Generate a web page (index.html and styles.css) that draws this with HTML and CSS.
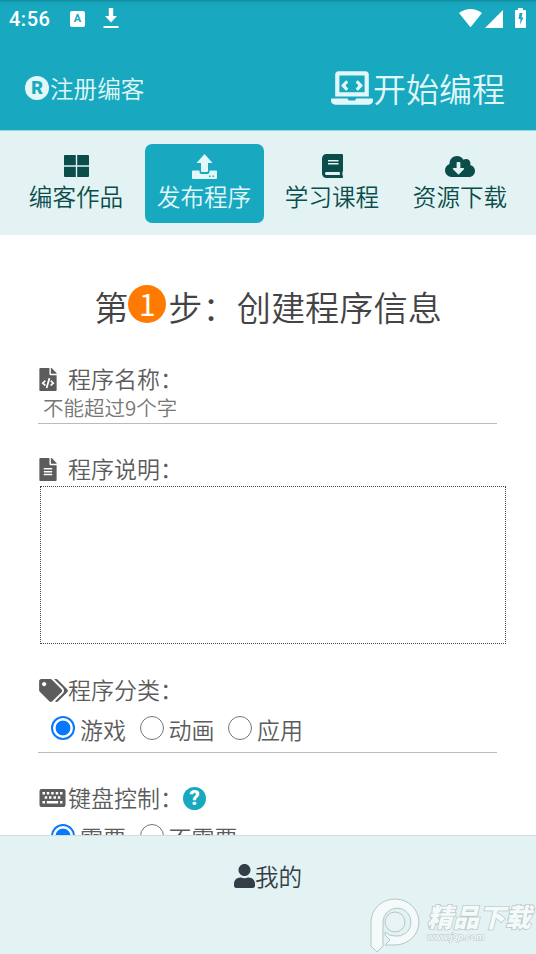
FILE: index.html
```html
<!DOCTYPE html>
<html lang="zh-CN">
<head>
<meta charset="utf-8">
<meta name="viewport" content="width=device-width, initial-scale=1">
<title>发布程序</title>
<link rel="stylesheet" href="styles.css">
</head>
<body>
<div class="app">
  <div class="status">
    <span class="clock">4:56</span>
    <span class="ime">A</span>
    <svg class="s-down" viewBox="0 0 16 21"><path d="M5.8 0h4.4v8H14l-6 6.500L2 8h3.800zM0.500 18h15v2h-15z"/></svg>
    <span class="grow"></span>
    <svg class="wifi" viewBox="0 0 23 18"><path d="M0 4Q11.500-4 23 4L11.500 18.300z"/></svg>
    <svg class="signal" viewBox="0 0 18 18"><path d="M18 0v18H0z"/></svg>
    <svg class="battery" viewBox="0 0 11 20"><path fill-rule="evenodd" d="M3 0h5v2h2q1 0 1 1v16q0 1-1 1H1q-1 0-1-1V3q0-1 1-1h2zM7.500 5H4.500L3.500 11h2L5 16.500 8.500 9.500H6.500z"/></svg>
  </div>

  <header class="header">
    <a class="register"><span class="reg-mark">R</span>注册编客</a>
    <a class="start">
      <svg viewBox="0 0 640 512"><path d="M255 256l-25.600-25.600c-6.200-6.200-6.200-16.400 0-22.600L255 182c6.200-6.200 6.200-16.400 0-22.600l-11.300-11.300c-6.200-6.200-16.400-6.200-22.600 0l-59.800 59.800c-6.200 6.200-6.200 16.400 0 22.600l59.800 59.800c6.200 6.200 16.400 6.200 22.600 0l11.300-11.300c6.200-6.300 6.200-16.500 0-23zM396.300 290.300c6.200 6.200 16.400 6.200 22.600 0l59.800-59.800c6.200-6.200 6.200-16.400 0-22.600l-59.800-59.800c-6.200-6.200-16.400-6.200-22.600 0L385 159.400c-6.200 6.200-6.200 16.400 0 22.600l25.600 25.800c6.200 6.200 6.200 16.400 0 22.600L385 256c-6.200 6.200-6.200 16.400 0 22.600zM624 416H381.500c-.7 19.800-14.700 32-32.700 32H288c-18.700 0-33-17.500-32.800-32H16c-8.800 0-16 7.200-16 16v16c0 35.200 28.800 64 64 64h512c35.200 0 64-28.800 64-64v-16c0-8.800-7.200-16-16-16zM576 48c0-26.400-21.600-48-48-48H112C85.600 0 64 21.600 64 48v336h512zm-64 272H128V64h384z"/></svg>开始编程</a>
  </header>

  <nav class="tabs">
    <a class="tab">
      <svg class="i-grid" viewBox="0 0 25 22"><path d="M1 0h10q.8 0 .8.800V10.200H0V1Q0 0 1 0zM13.200 0H24q1 0 1 1v9.200H13.200zM0 11.800h11.800V22H1q-1 0-1-1zM13.200 11.800H25V21q0 1-1 1H13.200z"/></svg>
      <span>编客作品</span></a>
    <a class="tab active">
      <svg class="i-upload" viewBox="0 0 25 25"><path fill-rule="evenodd" d="M12.500 0L20.500 9H16v8q0 1-1 1h-5q-1 0-1-1V9H4.500zM1 16.500h6.500V18q0 2 2 2h6q2 0 2-2v-1.500H24q1 0 1 1V24q0 1-1 1H1q-1 0-1-1v-6.500q0-1 1-1zM17 21.500v1.400h1.500v-1.400zM20.500 21.500v1.400H22v-1.400z"/></svg>
      <span>发布程序</span></a>
    <a class="tab">
      <svg class="i-book" viewBox="0 0 448 512"><path d="M448 360V24c0-13.300-10.700-24-24-24H96C43 0 0 43 0 96v320c0 53 43 96 96 96h328c13.300 0 24-10.700 24-24v-16c0-7.500-3.500-14.300-8.900-18.700-4.200-15.400-4.200-59.300 0-74.700 5.400-4.300 8.900-11.100 8.900-18.600zM128 134c0-3.300 2.700-6 6-6h212c3.300 0 6 2.700 6 6v20c0 3.300-2.700 6-6 6H134c-3.300 0-6-2.700-6-6v-20zm0 64c0-3.300 2.700-6 6-6h212c3.300 0 6 2.700 6 6v20c0 3.300-2.700 6-6 6H134c-3.300 0-6-2.700-6-6v-20zm253.400 250H96c-17.700 0-32-14.300-32-32 0-17.600 14.400-32 32-32h285.400c-1.900 17.100-1.900 46.900 0 64z"/></svg>
      <span>学习课程</span></a>
    <a class="tab">
      <svg class="i-cloud" viewBox="0 0 640 448"><path d="M537.600 194.600c4-10.700 6.400-22.400 6.400-34.600 0-53-43-96-96-96-19.700 0-38.100 6-53.300 16.200C367 32.200 315.300 0 256 0 167.600 0 96 71.600 96 160c0 2.700.1 5.400.2 8.100C40.200 187.800 0 241.200 0 304c0 79.500 64.500 144 144 144h368c70.700 0 128-57.300 128-128 0-61.900-44-113.600-102.400-125.400zm-132.900 88.700L299.300 388.700c-6.200 6.200-16.400 6.200-22.600 0L171.300 283.300c-10.100-10.100-2.900-27.300 11.300-27.300H248V144c0-8.800 7.200-16 16-16h48c8.800 0 16 7.200 16 16v112h65.400c14.200 0 21.400 17.200 11.300 27.300z"/></svg>
      <span>资源下载</span></a>
  </nav>

  <main class="form">
    <h1 class="title">第<span class="num">1</span>步：创建程序信息</h1>

    <section class="field name">
      <div class="label"><span class="icon"><svg class="i-file" viewBox="0 0 384 512"><path d="M384 121.900V128H256V0h6.100c6.400 0 12.500 2.500 17 7l97.900 98c4.500 4.500 7 10.600 7 16.900zM248 160c-13.200 0-24-10.800-24-24V0H24C10.700 0 0 10.700 0 24v464c0 13.300 10.700 24 24 24h336c13.300 0 24-10.700 24-24V160zM123.200 400.500a5.400 5.400 0 0 1-7.600.2l-64.900-60.800a5.400 5.400 0 0 1 0-7.900l64.900-60.800a5.400 5.400 0 0 1 7.600.2l19.600 20.900a5.400 5.400 0 0 1-.4 7.700L101.700 336l40.700 35.900a5.400 5.400 0 0 1 .4 7.700zm51.300 50.500l-27.500-8a5.400 5.400 0 0 1-3.700-6.700l61.400-211.600a5.400 5.400 0 0 1 6.700-3.700l27.500 8a5.400 5.400 0 0 1 3.700 6.700l-61.400 211.600a5.400 5.400 0 0 1-6.700 3.700zm158.800-111l-64.900 60.800a5.400 5.400 0 0 1-7.600-.2l-19.600-20.900a5.400 5.400 0 0 1 .4-7.700l40.700-36-40.700-35.900a5.400 5.400 0 0 1-.4-7.700l19.600-20.900a5.400 5.400 0 0 1 7.600-.2l64.900 60.800a5.400 5.400 0 0 1 0 7.900z"/></svg></span><span>程序名称：</span></div>
      <input class="input" type="text" placeholder="不能超过9个字">
    </section>

    <section class="field desc">
      <div class="label"><span class="icon"><svg class="i-file" viewBox="0 0 384 512"><path d="M224 136V0H24C10.700 0 0 10.700 0 24v464c0 13.300 10.700 24 24 24h336c13.300 0 24-10.700 24-24V160H248c-13.200 0-24-10.800-24-24zm64 236c0 6.600-5.400 12-12 12H108c-6.600 0-12-5.400-12-12v-8c0-6.600 5.400-12 12-12h168c6.600 0 12 5.400 12 12zm0-64c0 6.600-5.400 12-12 12H108c-6.600 0-12-5.400-12-12v-8c0-6.600 5.400-12 12-12h168c6.600 0 12 5.400 12 12zm0-72v8c0 6.600-5.400 12-12 12H108c-6.600 0-12-5.400-12-12v-8c0-6.600 5.400-12 12-12h168c6.600 0 12 5.400 12 12zm96-114.100V128H256V0h6.100c6.400 0 12.500 2.500 17 7l97.900 98c4.500 4.500 7 10.600 7 16.900z"/></svg></span><span>程序说明：</span></div>
      <textarea class="area"></textarea>
    </section>

    <section class="field kind">
      <div class="label"><span class="icon"><svg class="i-tags" viewBox="0 0 640 512"><path d="M497.900 225.900L286.100 14.100A48 48 0 0 0 252.100 0H48C21.500 0 0 21.500 0 48v204.100a48 48 0 0 0 14.100 33.900l211.800 211.900c18.700 18.700 49.100 18.700 67.900 0l204.100-204.100c18.700-18.800 18.700-49.200 0-67.900zM112 160c-26.500 0-48-21.500-48-48s21.500-48 48-48 48 21.500 48 48-21.500 48-48 48zm513.900 133.800L421.800 497.900c-18.700 18.700-49.100 18.700-67.900 0l-.4-.4L527.600 323.500c17-17 26.400-39.600 26.400-63.600s-9.400-46.600-26.400-63.600L331.400 0h48.700a48 48 0 0 1 33.900 14.100l211.900 211.800c18.700 18.700 18.700 49.100 0 67.900z"/></svg></span><span>程序分类：</span></div>
      <div class="radios">
        <label><i class="dot on"></i>游戏</label>
        <label><i class="dot"></i>动画</label>
        <label><i class="dot"></i>应用</label>
      </div>
    </section>

    <section class="field keys">
      <div class="label"><span class="icon"><svg class="i-key" viewBox="0 0 26 18"><path fill-rule="evenodd" d="M2 0h22q2 0 2 2v14q0 2-2 2H2q-2 0-2-2V2Q0 0 2 0zM3 3v2.500h2.500V3zM7.300 3v2.500h2.500V3zM11.700 3v2.500h2.500V3zM16.200 3v2.500h2.500V3zM20.500 3v2.500H23V3zM5.200 7.300v2.500h2.500V7.300zM9.500 7.300v2.500H12V7.300zM14 7.300v2.500h2.500V7.300zM18.300 7.300v2.500h2.500V7.300zM3 12v2.500h2.500V12zM7.300 12v2.500h11.400V12zM20.500 12v2.500H23V12z"/></svg></span><span>键盘控制：</span><b class="help">?</b></div>
      <div class="radios">
        <label><i class="dot on"></i>需要</label>
        <label><i class="dot"></i>不需要</label>
      </div>
    </section>
  </main>

  <footer class="footer">
    <a class="mine"><svg viewBox="0 0 448 512"><path d="M224 256c70.700 0 128-57.300 128-128S294.700 0 224 0 96 57.300 96 128s57.300 128 128 128zm89.600 32h-16.700c-22.200 10.200-46.900 16-72.900 16s-50.600-5.800-72.900-16h-16.700C60.200 288 0 348.200 0 422.400V464c0 26.500 21.500 48 48 48h352c26.500 0 48-21.500 48-48v-41.600c0-74.200-60.200-134.400-134.400-134.400z"/></svg>我的</a>
    <div class="watermark">
      <svg class="wm-logo" viewBox="0 0 50 56"><path d="M1 49V24a24 23 0 1 1 24 24H15l5-5-5-5v-3q4 4 10 4a14 14 0 1 0-12-14V49l-6 6z"/><circle cx="25" cy="25" r="10"/></svg>
      <div class="wm-text"><span class="wm-cn">精品下载</span><span class="wm-url">www.j9p.com</span></div>
    </div>
  </footer>
</div>
</body>
</html>
```
FILE: styles.css
```css
* { box-sizing: border-box; }
body {
  margin: 0;
  font-family: "Noto Sans CJK SC", sans-serif;
  font-weight: 350;
  color: #5c5c5c;
  background: #fff;
}
svg { display: block; fill: currentColor; flex: none; }
.app { height: 954px; display: flex; flex-direction: column; overflow: hidden; }

.status {
  height: 38px;
  flex: none;
  display: flex;
  align-items: center;
  padding: 0 10px 1px 9px;
  color: #fff;
  background: linear-gradient(#108597, #17a3b9 2px, #18a9c1 8px);
}
.clock { font: 500 20px/1 Roboto, sans-serif; width: 61px; padding-top: 1px; letter-spacing: .5px; }
.ime {
  width: 15px; height: 16px; border-radius: 2px;
  background: #fff; color: #18a9c1;
  font: 700 11px/15px Roboto, sans-serif; text-align: center;
}
.s-down { width: 16px; height: 21px; margin-left: 18px; }
.grow { flex: 1; }
.wifi { width: 23px; height: 18px; margin-bottom: 1px; }
.signal { width: 18px; height: 18px; margin-left: 3px; }
.battery { width: 11px; height: 20px; margin: 0 0 1px 12px; }

.header {
  height: 92px;
  flex: none;
  display: flex;
  justify-content: space-between;
  align-items: center;
  padding: 8px 31px 0 25px;
  background: #18a9c1;
  color: #e1f7f8;
}
.register, .start { display: flex; align-items: center; }
.register { font-size: 23.600px; line-height: 30px; }
.reg-mark {
  width: 24px; height: 24px; margin-right: 1px; border-radius: 50%;
  background: #e1f7f8; color: #18a9c1;
  font: 900 18px/24px Roboto, sans-serif; text-align: center;
}
.start { font-size: 33px; line-height: 40px; }
.start svg { width: 42px; height: 34px; }

.tabs {
  height: 105px;
  flex: none;
  display: grid;
  grid-template-columns: repeat(4, 119px);
  gap: 9px;
  justify-content: center;
  padding: 13px 0;
  background: #e3f3f4;
  border-top: 1px solid #9ad7df;
  color: #0b4d4b;
}
.tab {
  height: 79px; border-radius: 7px; font-size: 23.600px; line-height: 30px;
  display: grid; grid-template-rows: 37px 30px; justify-items: center; align-items: center; align-content: start;
}
.tab.active { background: #18a9c1; color: #e3f8f9; }
.tab svg { margin-top: 7px; }
.i-grid { width: 25px; height: 22px; }
.i-upload { width: 25px; height: 25px; }
.i-book { width: 21px; height: 24px; }
.i-cloud { width: 30px; height: 21px; }

.form { flex: 1; min-height: 0; overflow: hidden; padding: 47px 38px 0; }
.title {
  margin: 0; height: 48px; display: flex; justify-content: center; align-items: center;
  font-size: 34.200px; font-weight: 350; line-height: 48px; color: #444;
}
.num {
  width: 38px; height: 38px; margin: 0 2px 4px 0; border-radius: 50%;
  background: #ff7a00; color: #fff; font-size: 30px; font-weight: 400; line-height: 36px; text-align: center;
}
.field { font-size: 23px; }
.label { height: 30px; line-height: 30px; display: flex; align-items: center; }
.label span:not(.icon) { margin-top: -2px; }
.icon { width: 30px; padding-left: 1px; flex: none; }
.i-file { width: 18px; height: 23px; }
.i-tags { width: 29px; height: 23px; }
.i-key { width: 27px; height: 18px; }
.name { margin-top: 34px; }
.input {
  display: block; width: 459px; height: 30px; padding: 0 5px 3px;
  border: 0; border-bottom: 1px solid #bbb; outline: 0; background: none;
  font: 350 20.500px/26px "Noto Sans CJK SC", sans-serif;
}
.input::placeholder { color: #777; opacity: 1; }
.desc { margin-top: 30px; }
.area {
  display: block; width: 466px; height: 158px; margin: 2px 0 0 2px;
  border: 1px dotted #444; resize: none; outline: 0;
}
.kind { margin-top: 31px; }
.radios {
  width: 459px; height: 48px; padding: 0 0 0 13px;
  display: flex; gap: 13.500px; border-bottom: 1px solid #bbb;
}
.radios label { display: flex; line-height: 49px; }
.dot {
  width: 24px; height: 24px; margin: 11px 5px 0 0; flex: none;
  border: 1.500px solid #767676; border-radius: 50%;
}
.dot.on { border: 2px solid #0878ff; background: radial-gradient(circle, #0878ff 7px, #fff 7.800px); }
.keys { margin-top: 30px; }
.help {
  width: 23px; height: 23px; border-radius: 50%; background: #18a9c1; color: #fff;
  font: 900 20px/23px Roboto, sans-serif; text-align: center;
}

.footer {
  height: 119px; flex: none; position: relative;
  display: flex; justify-content: center; padding-top: 24px;
  background: #e3f3f4; border-top: 1px solid #cfdfe1; color: #343e49;
}
.mine { height: 32px; display: flex; align-items: center; font-size: 23.600px; line-height: 32px; }
.mine svg { width: 21px; height: 24px; }
.watermark { position: absolute; left: 370px; top: 61px; display: flex; color: #f4faf9; }
.wm-logo { width: 50px; height: 56px; stroke: #b8c5c5; stroke-width: 1; }
.wm-logo circle { fill: #e8f4f4; }
.wm-text { display: flex; flex-direction: column; margin: 3px 0 0 7px; }
.wm-cn {
  font-size: 26px; line-height: 32px; font-weight: 900; font-style: italic; white-space: nowrap;
  -webkit-text-stroke: 1.500px #b8c5c5; paint-order: stroke fill;
}
.wm-url {
  font: italic 700 9px/10px "Liberation Sans", sans-serif;
  -webkit-text-stroke: 1px #b8c5c5; paint-order: stroke fill;
}
```
